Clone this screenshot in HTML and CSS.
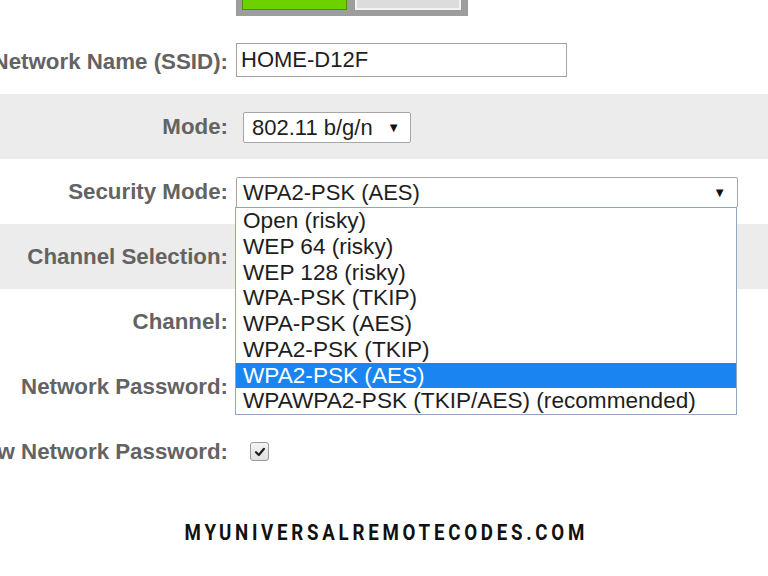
FILE: index.html
```html
<!DOCTYPE html>
<html>
<head>
<meta charset="utf-8">
<link rel="stylesheet" href="styles.css">
</head>
<body>
<div class="page">
  <div class="topbar">
    <div class="btnbox">
      <span class="btn btn-green"></span>
      <span class="btn btn-grey"></span>
    </div>
  </div>
  <div class="form">
    <div class="row">
      <div class="label"><span>Network Name (SSID):</span></div>
      <div class="ctrl"><div class="textbox">HOME-D12F</div></div>
    </div>
    <div class="row alt">
      <div class="label"><span>Mode:</span></div>
      <div class="ctrl"><div class="select select-mode"><span>802.11 b/g/n</span><span class="arrow">▼</span></div></div>
    </div>
    <div class="row">
      <div class="label"><span>Security Mode:</span></div>
      <div class="ctrl">
        <div class="select-wrap">
          <div class="select select-sec"><span>WPA2-PSK (AES)</span><span class="arrow">▼</span></div>
          <ul class="dropdown">
            <li>Open (risky)</li>
            <li>WEP 64 (risky)</li>
            <li>WEP 128 (risky)</li>
            <li>WPA-PSK (TKIP)</li>
            <li>WPA-PSK (AES)</li>
            <li>WPA2-PSK (TKIP)</li>
            <li class="sel">WPA2-PSK (AES)</li>
            <li>WPAWPA2-PSK (TKIP/AES) (recommended)</li>
          </ul>
        </div>
      </div>
    </div>
    <div class="row alt">
      <div class="label"><span>Channel Selection:</span></div>
      <div class="ctrl"></div>
    </div>
    <div class="row">
      <div class="label"><span>Channel:</span></div>
      <div class="ctrl"></div>
    </div>
    <div class="row">
      <div class="label"><span>Network Password:</span></div>
      <div class="ctrl"></div>
    </div>
    <div class="row">
      <div class="label"><span>Show Network Password:</span></div>
      <div class="ctrl">
        <span class="checkbox"><svg viewBox="0 0 12 12" width="12" height="12"><path d="M2 6.2 L4.8 9 L10 2.8" fill="none" stroke="#222" stroke-width="2.2" stroke-linecap="round" stroke-linejoin="round"/></svg></span>
      </div>
    </div>
  </div>
  <footer class="brand"><span class="brand-text">MYUNIVERSALREMOTECODES.COM</span></footer>
</div>
</body>
</html>
```

FILE: styles.css
```css
html, body {
  margin: 0;
  padding: 0;
  background: #ffffff;
}
body {
  width: 768px;
  height: 576px;
  overflow: hidden;
  font-family: Arial, "Liberation Sans", sans-serif;
}
.page {
  display: flex;
  flex-direction: column;
}
.topbar {
  height: 16px;
  margin-bottom: 13px;
  padding-left: 236px;
}
.btnbox {
  width: 220px;
  height: 16px;
  background: #9d9d9d;
  padding: 0 6px 0 6px;
  display: flex;
  gap: 8px;
  align-items: flex-start;
}
.btn {
  display: block;
  height: 10px;
  box-sizing: border-box;
}
.btn-green {
  width: 105px;
  background: #6dd100;
  border: 1px solid #4a9400;
  border-top: none;
}
.btn-grey {
  width: 106px;
  background: #dcdcdc;
  border: 2px solid #f2f2f2;
  border-top: none;
}
.form {
  display: flex;
  flex-direction: column;
}
.row {
  display: grid;
  grid-template-columns: 228px 1fr;
  column-gap: 8px;
  height: 65px;
  align-items: center;
}
.row.alt {
  background: #ececec;
}
.label {
  display: flex;
  justify-content: flex-end;
  white-space: nowrap;
  font-size: 22.3px;
  font-weight: bold;
  color: #636363;
}
.ctrl {
  display: flex;
  align-items: center;
  font-size: 22px;
  color: #1e1e1e;
}
.textbox {
  width: 331px;
  height: 34px;
  box-sizing: border-box;
  border: 1px solid #a4a4a4;
  padding-left: 4px;
  line-height: 32px;
  margin-top: -3px;
}
.select {
  box-sizing: border-box;
  height: 31px;
  border: 1px solid #a6a6a6;
  border-radius: 2px;
  display: flex;
  align-items: center;
  justify-content: space-between;
  background: #fff;
}
.select-mode {
  width: 168px;
  margin-left: 7px;
  padding: 0 10px 0 8px;
  margin-top: 2px;
}
.arrow {
  font-size: 13px;
  color: #111;
}
.select-wrap {
  position: relative;
  width: 502px;
}
.select-sec {
  width: 502px;
  padding: 0 11px 0 6px;
  margin-top: 2px;
}
.dropdown {
  position: absolute;
  left: -1px;
  top: 32px;
  width: 502px;
  box-sizing: border-box;
  margin: 0;
  padding: 0;
  list-style: none;
  background: #fff;
  border: 1px solid #8fa6c0;
  z-index: 2;
}
.dropdown li {
  height: 25.75px;
  line-height: 25px;
  padding-left: 7px;
  font-size: 22.6px;
  color: #1e1e1e;
  white-space: nowrap;
}
.dropdown li.sel {
  background: #1a84f0;
  color: #ffffff;
}
.checkbox {
  margin-left: 14px;
  width: 19px;
  height: 19px;
  box-sizing: border-box;
  border: 1px solid #9a9a9a;
  border-radius: 3px;
  background: linear-gradient(#f4f4f4, #e0e0e0);
  display: flex;
  align-items: center;
  justify-content: center;
}
.brand {
  margin-top: 36px;
  display: flex;
  justify-content: center;
}
.brand-text {
  display: inline-block;
  font-family: Roboto, "Liberation Sans", sans-serif;
  font-weight: bold;
  font-size: 22px;
  letter-spacing: 4.4px;
  color: #111;
  transform: scaleX(0.85);
  margin-right: -4px;
}
```
